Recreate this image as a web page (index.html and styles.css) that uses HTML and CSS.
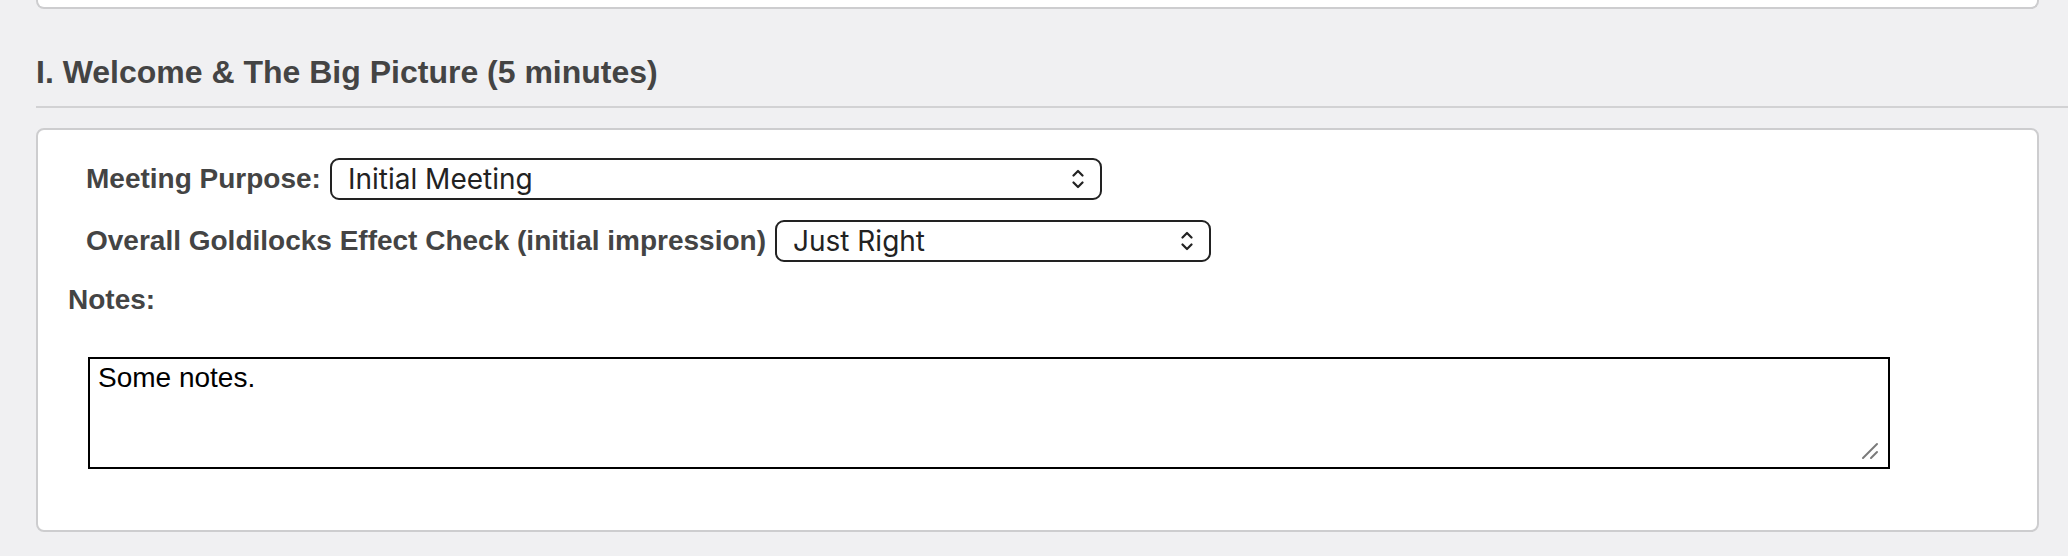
FILE: index.html
```html
<!DOCTYPE html>
<html lang="en">
<head>
    <meta charset="UTF-8">
    <meta name="viewport" content="width=device-width, initial-scale=1.0">
    <title>Meeting Agenda</title>
    <link rel="stylesheet" href="styles.css">
</head>
<body>
    <div class="page">
        <div class="card card-prev"></div>

        <h2 class="section-title">I. Welcome &amp; The Big Picture (5 minutes)</h2>

        <div class="card">
            <div class="fields">
                <div class="field-row">
                    <label for="meeting_purpose">Meeting Purpose:</label>
                    <span class="select-wrap">
                        <select id="meeting_purpose" class="select-purpose">
                            <option selected>Initial Meeting</option>
                            <option>Follow-up Meeting</option>
                            <option>Final Review</option>
                        </select>
                        <svg class="select-arrow" width="12" height="20" viewBox="0 0 12 20">
                            <path d="M1.5 6.5 L6 2 L10.5 6.5" fill="none" stroke="#222" stroke-width="2.2" stroke-linecap="round" stroke-linejoin="round"/>
                            <path d="M1.5 13.5 L6 18 L10.5 13.5" fill="none" stroke="#222" stroke-width="2.2" stroke-linecap="round" stroke-linejoin="round"/>
                        </svg>
                    </span>
                </div>

                <div class="field-row">
                    <label for="goldilocks">Overall Goldilocks Effect Check (initial impression)</label>
                    <span class="select-wrap">
                        <select id="goldilocks" class="select-check">
                            <option>Too Little</option>
                            <option selected>Just Right</option>
                            <option>Too Much</option>
                        </select>
                        <svg class="select-arrow" width="12" height="20" viewBox="0 0 12 20">
                            <path d="M1.5 6.5 L6 2 L10.5 6.5" fill="none" stroke="#222" stroke-width="2.2" stroke-linecap="round" stroke-linejoin="round"/>
                            <path d="M1.5 13.5 L6 18 L10.5 13.5" fill="none" stroke="#222" stroke-width="2.2" stroke-linecap="round" stroke-linejoin="round"/>
                        </svg>
                    </span>
                </div>
            </div>

            <label for="notes" class="notes-label">Notes:</label>
            <div class="notes-wrap">
                <textarea id="notes" class="notes">Some notes.</textarea>
                <svg class="notes-grip" width="20" height="20" viewBox="0 0 20 20">
                    <path d="M3 17 L17 3" stroke="#7a7a7a" stroke-width="2" stroke-linecap="round"/>
                    <path d="M11 17 L17 11" stroke="#7a7a7a" stroke-width="2" stroke-linecap="round"/>
                </svg>
            </div>
        </div>
    </div>
</body>
</html>
```

FILE: styles.css
```css
body {
    font-family: 'Liberation Sans', Arial, sans-serif;
    background-color: #f0f0f2;
    margin: 0;
    padding: 0;
}

.page {
    padding: 0 29px 0 36px;
}

.card {
    background-color: white;
    border: 2px solid #cdcdcf;
    border-radius: 8px;
    padding: 28px 30px 61px;
}

.card-prev {
    height: 7px;
    padding: 0;
    border-top: none;
    border-radius: 0 0 8px 8px;
}

.section-title {
    font-size: 32px;
    font-weight: bold;
    line-height: 36px;
    color: #444;
    margin: 45px -29px 20px 0;
    padding-bottom: 16px;
    border-bottom: 2px solid #d2d2d4;
}

.fields {
    margin-left: 18px;
    display: flex;
    flex-direction: column;
    gap: 20px;
}

.field-row {
    display: flex;
    align-items: center;
    gap: 9px;
}

.field-row label,
.notes-label {
    font-size: 28px;
    font-weight: bold;
    line-height: 32px;
    color: #444;
}

.select-wrap {
    position: relative;
    display: inline-block;
}

select {
    appearance: none;
    -webkit-appearance: none;
    height: 42px;
    padding: 0 40px 0 16px;
    border: 2px solid #222;
    border-radius: 9px;
    background-color: white;
    font-family: Inter, 'Noto Sans', sans-serif;
    font-size: 28px;
    color: #222;
    outline: none;
}

.select-purpose {
    width: 772px;
}

.select-check {
    width: 436px;
}

.select-arrow {
    position: absolute;
    right: 18px;
    top: 11px;
    pointer-events: none;
}

.notes-label {
    display: block;
    margin-top: 22px;
}

.notes-wrap {
    position: relative;
    width: 1802px;
    margin: 41px 0 0 20px;
}

.notes {
    display: block;
    box-sizing: border-box;
    width: 100%;
    height: 112px;
    padding: 3px 8px;
    border: 2px solid #000;
    font-family: 'Liberation Sans', Arial, sans-serif;
    font-size: 28px;
    line-height: 32px;
    color: #000;
    outline: none;
    resize: none;
}

.notes-grip {
    position: absolute;
    right: 10px;
    bottom: 8px;
    pointer-events: none;
}
```
